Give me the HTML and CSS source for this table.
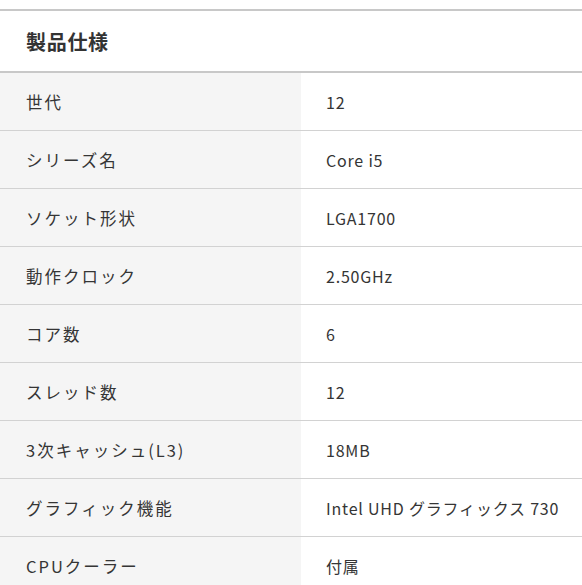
FILE: index.html
```html
<!DOCTYPE html>
<html lang="ja">
<head>
<meta charset="utf-8">
<link rel="stylesheet" href="styles.css">
</head>
<body>
<section class="spec">
  <h2 class="spec-title">製品仕様</h2>
  <div class="spec-table">
    <div class="row"><div class="label">世代</div><div class="value">12</div></div>
    <div class="row"><div class="label">シリーズ名</div><div class="value">Core i5</div></div>
    <div class="row"><div class="label">ソケット形状</div><div class="value">LGA1700</div></div>
    <div class="row"><div class="label">動作クロック</div><div class="value">2.50GHz</div></div>
    <div class="row"><div class="label">コア数</div><div class="value">6</div></div>
    <div class="row"><div class="label">スレッド数</div><div class="value">12</div></div>
    <div class="row"><div class="label">3次キャッシュ(L3)</div><div class="value">18MB</div></div>
    <div class="row"><div class="label">グラフィック機能</div><div class="value">Intel UHD グラフィックス 730</div></div>
    <div class="row"><div class="label">CPUクーラー</div><div class="value">付属</div></div>
  </div>
</section>
</body>
</html>
```
FILE: styles.css
```css
html, body {
  margin: 0;
  padding: 0;
  background: #fff;
}
body {
  font-family: "Noto Sans CJK JP", "Noto Sans", sans-serif;
  color: #353535;
  padding-top: 9px;
}
.spec {
  border-top: 2px solid #c8c8c8;
}
.spec-title {
  margin: 0;
  height: 60px;
  display: flex;
  align-items: center;
  padding-left: 26px;
  font-size: 20px;
  font-weight: 700;
  letter-spacing: 0.7px;
  color: #333;
  border-bottom: 2px solid #c8c8c8;
}
.row {
  display: grid;
  grid-template-columns: 301px 1fr;
  height: 57px;
  border-bottom: 1px solid #d2d2d2;
}
.label {
  background: #f5f5f5;
  display: flex;
  align-items: center;
  padding-left: 26px;
  font-size: 16.5px;
  letter-spacing: 2px;
}
.value {
  display: flex;
  align-items: center;
  padding-left: 25px;
  font-size: 16px;
  letter-spacing: 0.8px;
}
```
